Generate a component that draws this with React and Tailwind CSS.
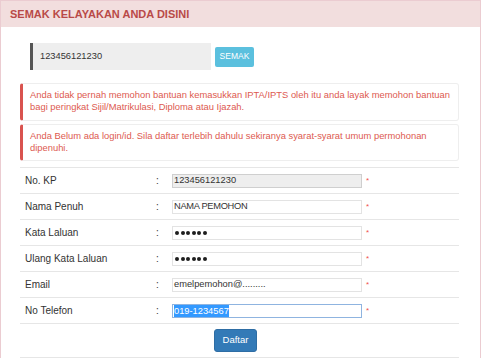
import React from 'react';

const FONT = { fontFamily: '"Liberation Sans", Arial, sans-serif' };

const ROWS = [
  { label: 'No. KP', value: '123456121230', disabled: true },
  { label: 'Nama Penuh', value: 'NAMA PEMOHON' },
  { label: 'Kata Laluan', value: '••••••', dots: true },
  { label: 'Ulang Kata Laluan', value: '••••••', dots: true },
  { label: 'Email', value: 'emelpemohon@.........' },
  { label: 'No Telefon', value: '019-1234567', selected: true },
];

function Dots() {
  return (
    <div className="flex items-center gap-[1.5px] pl-[1px]">
      {[0, 1, 2, 3, 4, 5].map((i) => (
        <div key={i} className="h-[4px] w-[4px] rounded-full bg-[#1e1e1e]" />
      ))}
    </div>
  );
}

function FieldRow({ row }) {
  let box = 'border-[#e3e3e3] bg-white';
  if (row.disabled) box = 'border-[#cfcfcf] bg-[#eeeeee]';
  if (row.selected) box = 'border-[#8fb4e0] bg-white';

  return (
    <div className="flex h-[26px] items-center border-b border-[#e6e6e6]">
      <div className="w-[136px] pl-[5px] text-[10px] text-[#333]">{row.label}</div>
      <div className="w-[16px] text-[10px] text-[#333]">:</div>
      <div className={`flex h-[14px] w-[190px] items-center border px-[1px] text-[9.3px] text-[#333] ${box}`}>
        {row.selected ? (
          <span className="bg-[#3399ff] leading-[12px] text-white">{row.value}</span>
        ) : row.dots ? (
          <Dots />
        ) : (
          <span className={row.value === 'NAMA PEMOHON' ? 'tracking-[-0.3px]' : ''}>{row.value}</span>
        )}
      </div>
      <div className="pl-[4px] text-[8px] text-[#f05050]">*</div>
    </div>
  );
}

export default function App() {
  return (
    <div className="h-[358px] w-[482px] overflow-hidden bg-white" style={FONT}>
      <div className="h-[360px] w-[481px] border border-[#ebccd1]">
        <div className="flex h-[26px] items-center bg-[#f2dede] px-[9px] text-[11px] font-bold text-[#b94a48]">
          SEMAK KELAYAKAN ANDA DISINI
        </div>

        <div className="flex items-center gap-[4px] pl-[29px] pt-[16px]">
          <div className="flex h-[27px] w-[181px] items-center border-l-[3px] border-[#555] bg-[#eeeeee] pl-[7px] text-[9.3px] text-[#333]">
            123456121230
          </div>
          <button className="h-[20px] w-[39px] rounded-[2px] bg-[#5bc0de] text-[8.5px] text-white">
            SEMAK
          </button>
        </div>

        <div className="ml-[19px] mt-[13px] w-[439px]">
          <div className="h-[38px] rounded-[3px] border border-l-[3px] border-[#eeeeee] border-l-[#d9534f] pl-[7px] pr-[6px] pt-[5px] text-[9.4px] leading-[12px] text-[#dd5a50]">
            Anda tidak pernah memohon bantuan kemasukkan IPTA/IPTS oleh itu anda layak memohon bantuan bagi peringkat Sijil/Matrikulasi, Diploma atau Ijazah.
          </div>
          <div className="mt-[3px] h-[37px] rounded-[3px] border border-l-[3px] border-[#eeeeee] border-l-[#d9534f] pl-[7px] pr-[6px] pt-[5px] text-[9.4px] leading-[12px] text-[#dd5a50]">
            Anda Belum ada login/id. Sila daftar terlebih dahulu sekiranya syarat-syarat umum permohonan dipenuhi.
          </div>

          <div className="mt-[6px] border-t border-[#e6e6e6]">
            {ROWS.map((row) => (
              <FieldRow key={row.label} row={row} />
            ))}
            <div className="flex h-[34px] items-center border-b border-[#e6e6e6] pl-[194px]">
              <button className="h-[23px] w-[43px] rounded-[3px] border border-[#2e6da4] bg-[#337ab7] text-[9.5px] text-white">
                Daftar
              </button>
            </div>
          </div>
        </div>
      </div>
    </div>
  );
}
